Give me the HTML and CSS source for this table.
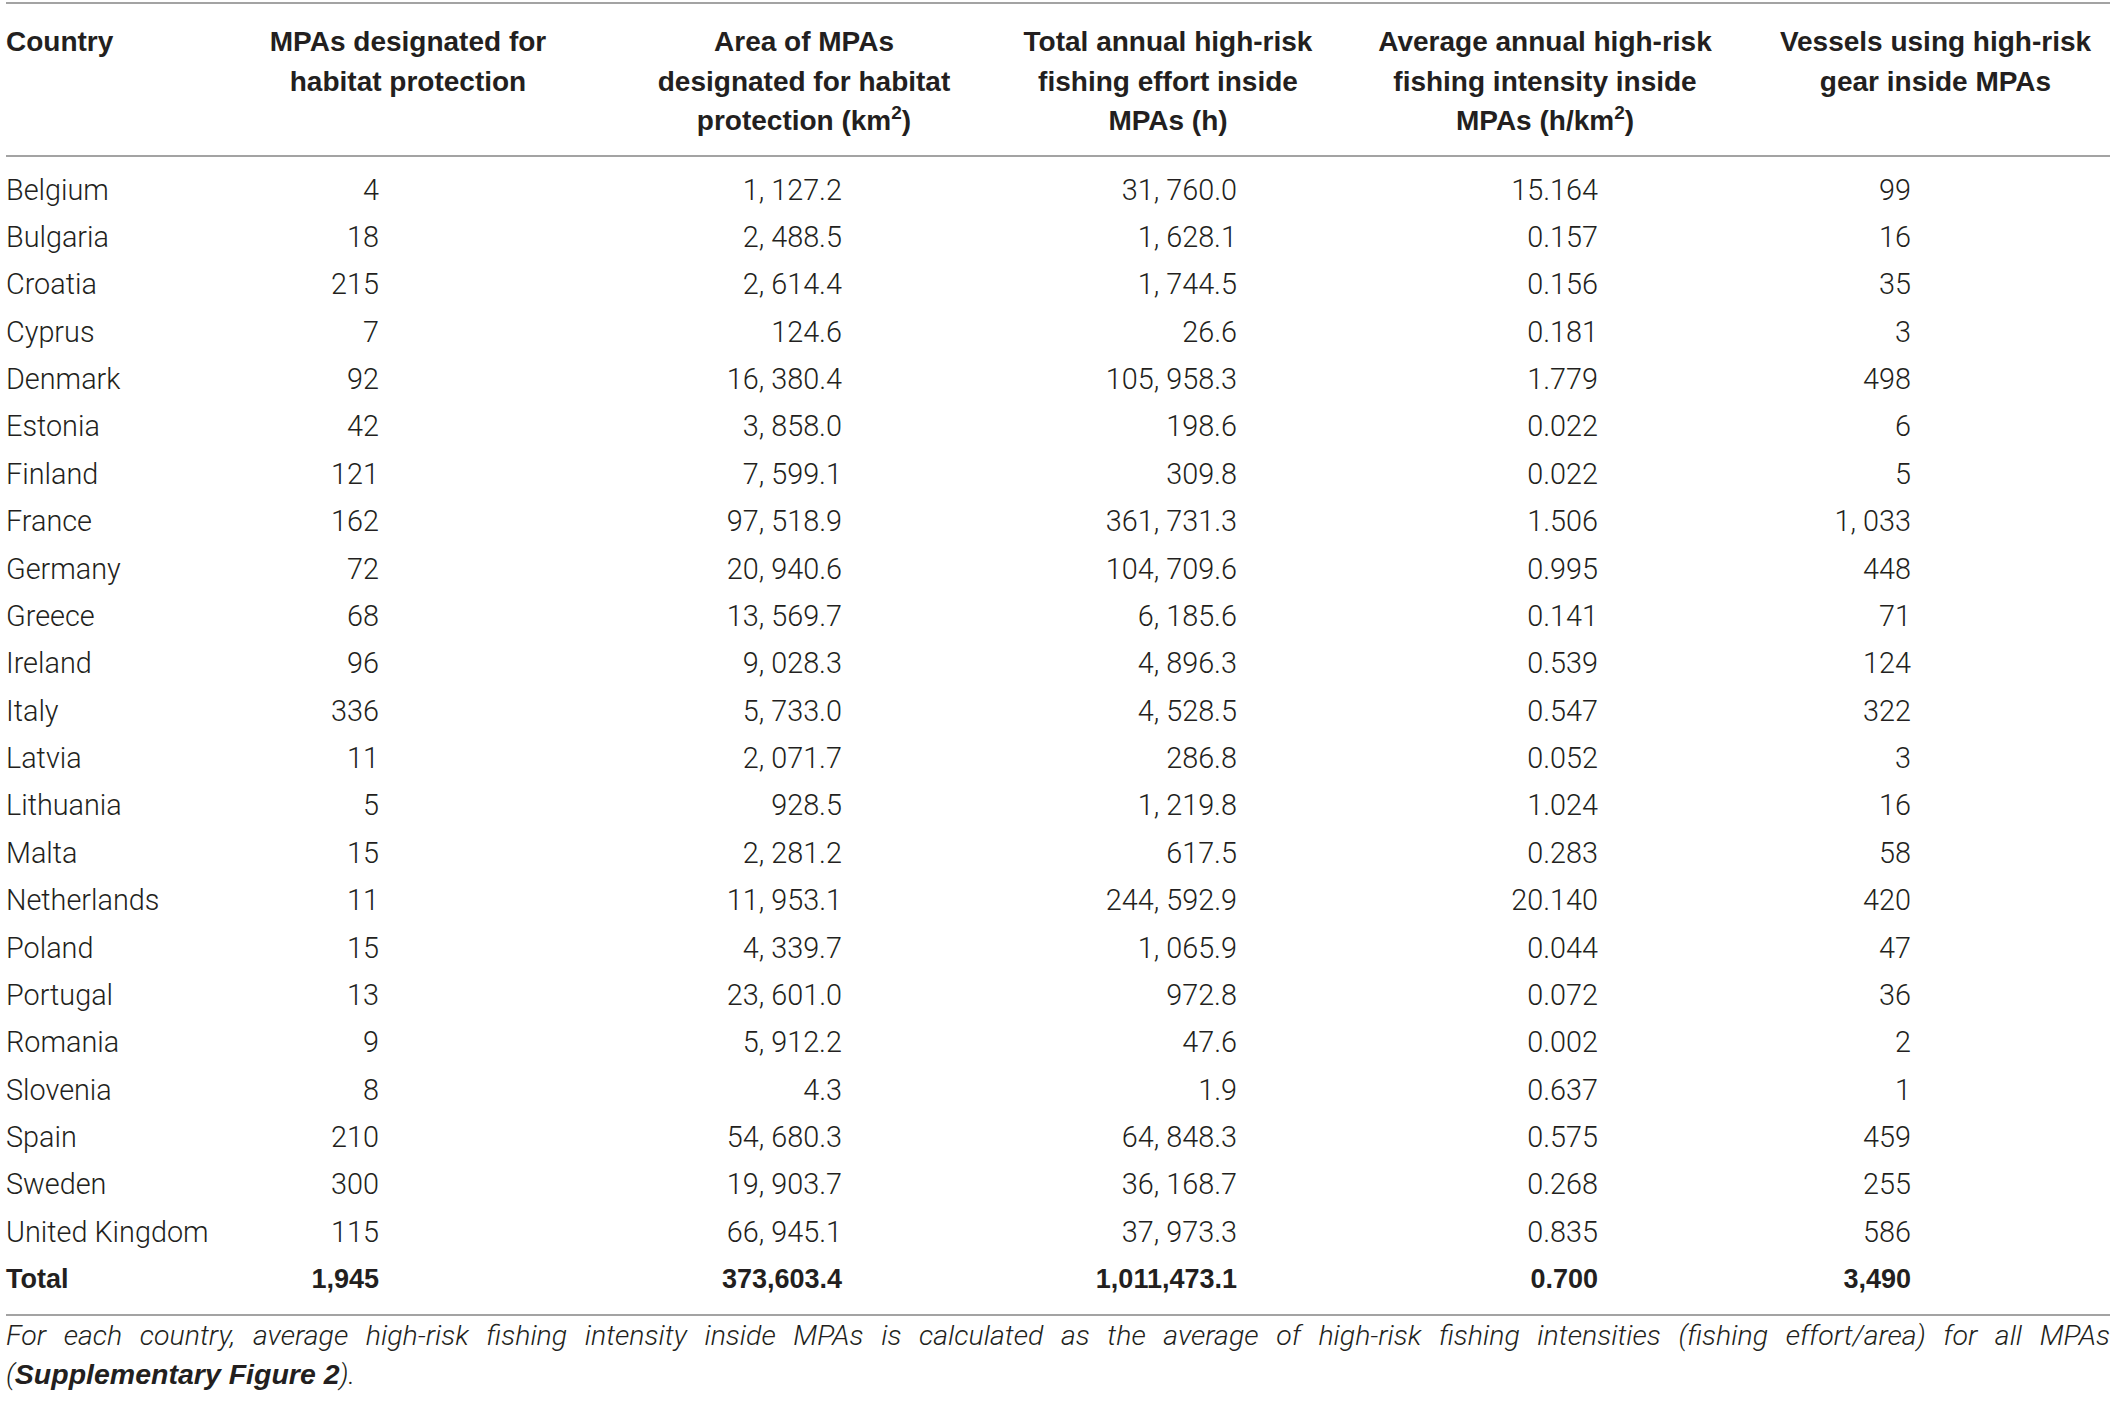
FILE: index.html
```html
<!DOCTYPE html>
<html>
<head>
<meta charset="utf-8">
<link rel="stylesheet" href="styles.css">
</head>
<body>
<div class="wrap">
<table class="tbl">
<colgroup>
<col class="c1"><col class="c2"><col class="c3"><col class="c4"><col class="c5"><col class="c6">
</colgroup>
<thead>
<tr>
<th class="h-left">Country</th>
<th>MPAs designated for<br>habitat protection</th>
<th>Area of MPAs<br>designated for habitat<br>protection (km<sup>2</sup>)</th>
<th>Total annual high-risk<br>fishing effort inside<br>MPAs (h)</th>
<th>Average annual high-risk<br>fishing intensity inside<br>MPAs (h/km<sup>2</sup>)</th>
<th>Vessels using high-risk<br>gear inside MPAs</th>
</tr>
</thead>
<tbody>
<tr class="first"><td>Belgium</td><td>4</td><td>1, 127.2</td><td>31, 760.0</td><td>15.164</td><td>99</td></tr>
<tr><td>Bulgaria</td><td>18</td><td>2, 488.5</td><td>1, 628.1</td><td>0.157</td><td>16</td></tr>
<tr><td>Croatia</td><td>215</td><td>2, 614.4</td><td>1, 744.5</td><td>0.156</td><td>35</td></tr>
<tr><td>Cyprus</td><td>7</td><td>124.6</td><td>26.6</td><td>0.181</td><td>3</td></tr>
<tr><td>Denmark</td><td>92</td><td>16, 380.4</td><td>105, 958.3</td><td>1.779</td><td>498</td></tr>
<tr><td>Estonia</td><td>42</td><td>3, 858.0</td><td>198.6</td><td>0.022</td><td>6</td></tr>
<tr><td>Finland</td><td>121</td><td>7, 599.1</td><td>309.8</td><td>0.022</td><td>5</td></tr>
<tr><td>France</td><td>162</td><td>97, 518.9</td><td>361, 731.3</td><td>1.506</td><td>1, 033</td></tr>
<tr><td>Germany</td><td>72</td><td>20, 940.6</td><td>104, 709.6</td><td>0.995</td><td>448</td></tr>
<tr><td>Greece</td><td>68</td><td>13, 569.7</td><td>6, 185.6</td><td>0.141</td><td>71</td></tr>
<tr><td>Ireland</td><td>96</td><td>9, 028.3</td><td>4, 896.3</td><td>0.539</td><td>124</td></tr>
<tr><td>Italy</td><td>336</td><td>5, 733.0</td><td>4, 528.5</td><td>0.547</td><td>322</td></tr>
<tr><td>Latvia</td><td>11</td><td>2, 071.7</td><td>286.8</td><td>0.052</td><td>3</td></tr>
<tr><td>Lithuania</td><td>5</td><td>928.5</td><td>1, 219.8</td><td>1.024</td><td>16</td></tr>
<tr><td>Malta</td><td>15</td><td>2, 281.2</td><td>617.5</td><td>0.283</td><td>58</td></tr>
<tr><td>Netherlands</td><td>11</td><td>11, 953.1</td><td>244, 592.9</td><td>20.140</td><td>420</td></tr>
<tr><td>Poland</td><td>15</td><td>4, 339.7</td><td>1, 065.9</td><td>0.044</td><td>47</td></tr>
<tr><td>Portugal</td><td>13</td><td>23, 601.0</td><td>972.8</td><td>0.072</td><td>36</td></tr>
<tr><td>Romania</td><td>9</td><td>5, 912.2</td><td>47.6</td><td>0.002</td><td>2</td></tr>
<tr><td>Slovenia</td><td>8</td><td>4.3</td><td>1.9</td><td>0.637</td><td>1</td></tr>
<tr><td>Spain</td><td>210</td><td>54, 680.3</td><td>64, 848.3</td><td>0.575</td><td>459</td></tr>
<tr><td>Sweden</td><td>300</td><td>19, 903.7</td><td>36, 168.7</td><td>0.268</td><td>255</td></tr>
<tr><td>United Kingdom</td><td>115</td><td>66, 945.1</td><td>37, 973.3</td><td>0.835</td><td>586</td></tr>
<tr class="total"><td>Total</td><td>1,945</td><td>373,603.4</td><td>1,011,473.1</td><td>0.700</td><td>3,490</td></tr>
</tbody>
</table>
<div class="note">
<span class="note-line">For each country, average high-risk fishing intensity inside MPAs is calculated as the average of high-risk fishing intensities (fishing effort/area) for all MPAs</span>
<span class="note-last">(<b>Supplementary Figure 2</b>).</span>
</div>
</div>
</body>
</html>
```
FILE: styles.css
```css
html, body {
  margin: 0;
  padding: 0;
  background: #ffffff;
}
.wrap {
  padding: 2px 7px 0 6px;
  color: #231f20;
  font-family: "Liberation Sans", Arial, sans-serif;
}
.tbl {
  width: 2104px;
  border-collapse: collapse;
  table-layout: fixed;
  border-top: 2px solid #a3a3a3;
  border-bottom: 2px solid #a3a3a3;
}
.c1 { width: 209px; }
.c2 { width: 386px; }
.c3 { width: 406px; }
.c4 { width: 322px; }
.c5 { width: 432px; }
.c6 { width: 349px; }
.tbl thead tr {
  border-bottom: 2px solid #a3a3a3;
}
.tbl th {
  font-weight: bold;
  font-size: 28px;
  line-height: 39.5px;
  text-align: center;
  vertical-align: top;
  padding: 18px 0 14px 0;
  white-space: nowrap;
}
.tbl th.h-left {
  text-align: left;
}
.tbl sup {
  font-size: 19px;
  line-height: 0;
  vertical-align: 11px;
}
.tbl td {
  font-family: "Roboto", "Liberation Sans", sans-serif;
  font-weight: 300;
  font-size: 28.8px;
  line-height: 47.37px;
  height: 47.37px;
  padding: 0;
  text-align: right;
  white-space: nowrap;
}
.tbl td:nth-child(1) { text-align: left; }
.tbl td:nth-child(2) { padding-right: 222px; }
.tbl td:nth-child(3) { padding-right: 165px; }
.tbl td:nth-child(4) { padding-right: 92px; }
.tbl td:nth-child(5) { padding-right: 163px; }
.tbl td:nth-child(6) { padding-right: 199px; }
.tbl tr.first td { padding-top: 10px; }
.tbl tr.total td {
  padding-bottom: 10px;
  font-family: "Liberation Sans", Arial, sans-serif;
  font-weight: bold;
  font-size: 27px;
}
.note {
  margin: 1px 0 0 0;
  font-family: "Roboto", "Liberation Sans", sans-serif;
  font-weight: 300;
  font-style: italic;
  font-size: 28.5px;
  line-height: 38px;
  width: 2104px;
}
.note-line {
  display: block;
  text-align: justify;
  text-align-last: justify;
  white-space: nowrap;
}
.note-last {
  display: block;
}
.note b {
  font-family: "Liberation Sans", Arial, sans-serif;
  font-weight: bold;
}
```
